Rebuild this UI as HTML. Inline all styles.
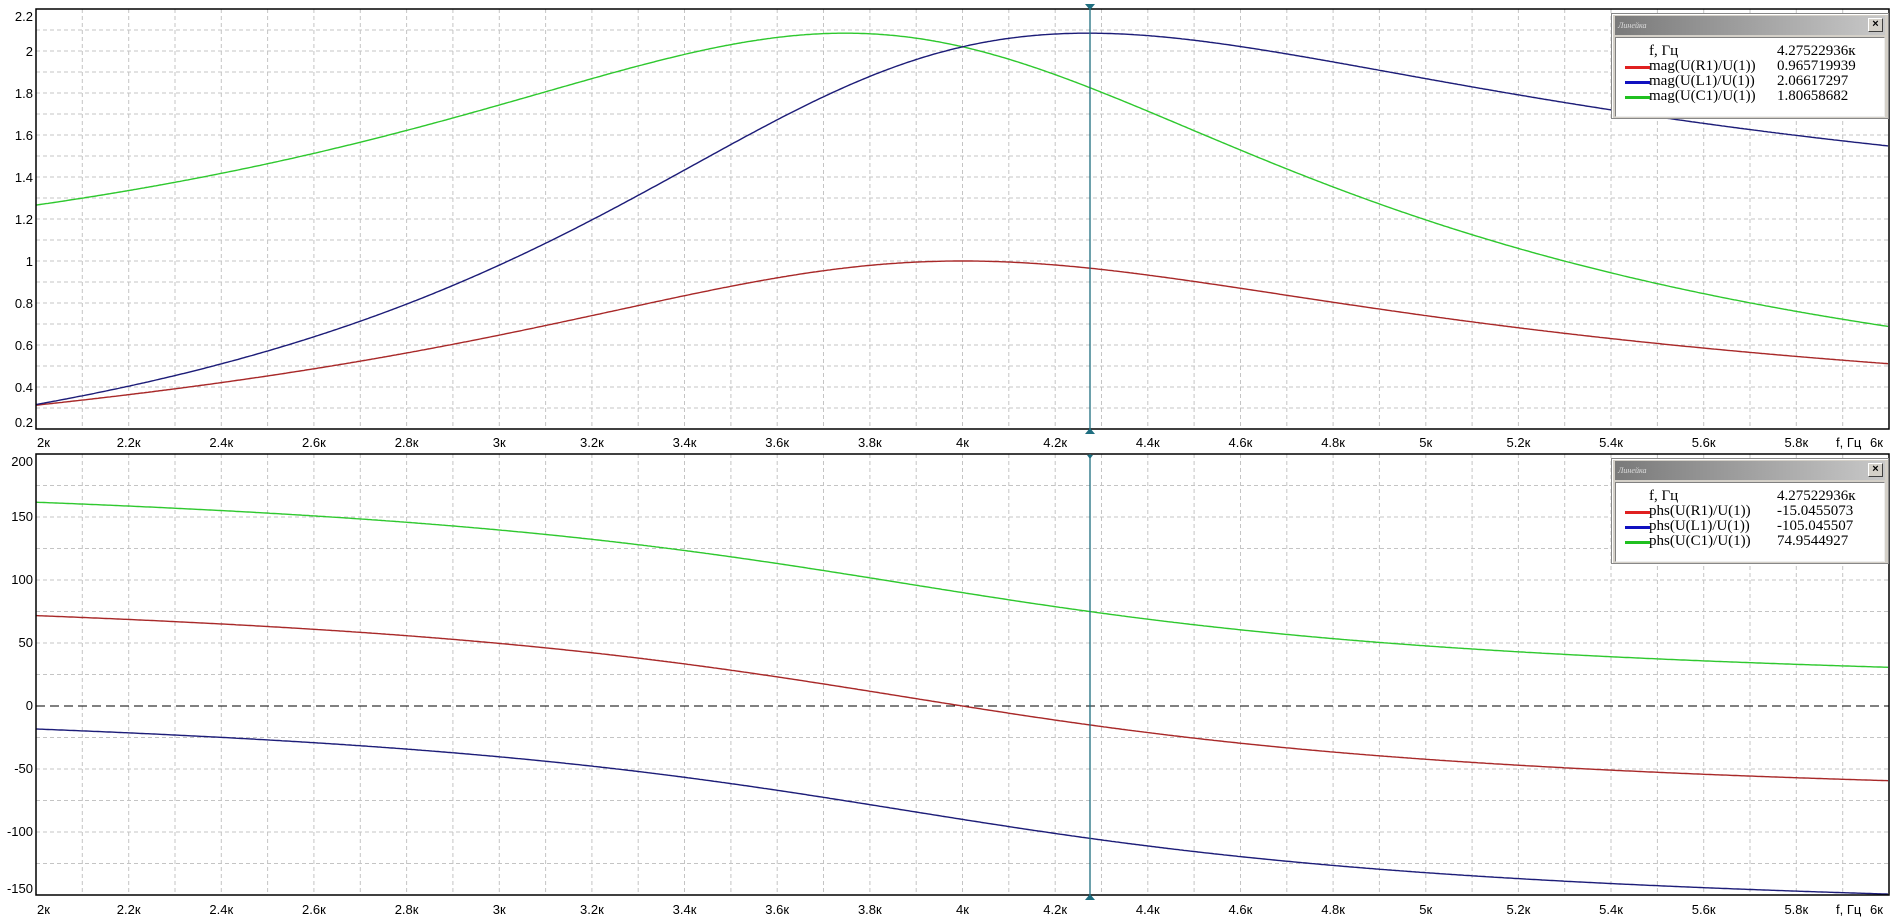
<!DOCTYPE html>
<html><head><meta charset="utf-8"><style>
body{margin:0;width:1892px;height:915px;background:#fff;overflow:hidden;position:relative;font-family:"Liberation Sans",sans-serif}
.yl{position:absolute;width:33px;text-align:right;font-size:13px;color:#000;line-height:14px}
.xl{position:absolute;font-size:13px;line-height:14px;color:#000;white-space:nowrap}
.leg{position:absolute;left:1611px;width:276px;background:#d4d0c8;border:1px solid #888;box-shadow:inset 1px 1px #fff}
.tb{height:19px;margin:2px 3px;background:linear-gradient(to right,#7a7a7a,#c8c8c8);position:relative;font:italic 8px "Liberation Serif",serif;color:#ddd;line-height:19px;padding-left:3px}
.x{position:absolute;right:2px;top:2px;width:13px;height:12px;background:#d4d0c8;border:1px solid #fff;border-right-color:#404040;border-bottom-color:#404040;font:bold 11px "Liberation Sans",sans-serif;color:#000;line-height:11px;text-align:center;font-style:normal}
.bd{margin:0 3px 3px;background:#fff;border:1px solid #808080;border-right-color:#eee;border-bottom-color:#eee;height:78px;position:relative;font:15px "Liberation Serif","Noto Serif CJK SC",serif;color:#000}
.r{position:absolute;left:0;width:100%;height:15px;line-height:15px}
.r .n{position:absolute;left:33px}.r .v{position:absolute;left:161px}
.r .s{position:absolute;left:9px;top:7px;width:25px;height:3px}
</style></head><body>
<svg id="g" width="1892" height="915" style="position:absolute;left:0;top:0"></svg>
<div class="yl" style="top:10px">2.2</div><div class="yl" style="top:45px">2</div><div class="yl" style="top:87px">1.8</div><div class="yl" style="top:129px">1.6</div><div class="yl" style="top:171px">1.4</div><div class="yl" style="top:213px">1.2</div><div class="yl" style="top:255px">1</div><div class="yl" style="top:297px">0.8</div><div class="yl" style="top:339px">0.6</div><div class="yl" style="top:381px">0.4</div><div class="yl" style="top:416px">0.2</div>
<div class="yl" style="top:455px">200</div><div class="yl" style="top:510px">150</div><div class="yl" style="top:573px">100</div><div class="yl" style="top:636px">50</div><div class="yl" style="top:699px">0</div><div class="yl" style="top:762px">-50</div><div class="yl" style="top:825px">-100</div><div class="yl" style="top:882px">-150</div>
<div id="xl"></div>
<div class="leg" style="top:13px;height:104px">
<div class="tb">Линейка<div class="x">×</div></div>
<div class="bd">
<div class="r" style="top:6px"><span class="n">f, Гц</span><span class="v">4.27522936к</span></div>
<div class="r" style="top:21px"><span class="s" style="background:#e02020"></span><span class="n">mag(U(R1)/U(1))</span><span class="v">0.965719939</span></div>
<div class="r" style="top:36px"><span class="s" style="background:#1010c0"></span><span class="n">mag(U(L1)/U(1))</span><span class="v">2.06617297</span></div>
<div class="r" style="top:51px"><span class="s" style="background:#20c020"></span><span class="n">mag(U(C1)/U(1))</span><span class="v">1.80658682</span></div>
</div></div>
<div class="leg" style="top:458px;height:104px">
<div class="tb">Линейка<div class="x">×</div></div>
<div class="bd">
<div class="r" style="top:6px"><span class="n">f, Гц</span><span class="v">4.27522936к</span></div>
<div class="r" style="top:21px"><span class="s" style="background:#e02020"></span><span class="n">phs(U(R1)/U(1))</span><span class="v">-15.0455073</span></div>
<div class="r" style="top:36px"><span class="s" style="background:#1010c0"></span><span class="n">phs(U(L1)/U(1))</span><span class="v">-105.045507</span></div>
<div class="r" style="top:51px"><span class="s" style="background:#20c020"></span><span class="n">phs(U(C1)/U(1))</span><span class="v">74.9544927</span></div>
</div></div>
<script>
var L=36,R=1889,W=R-L,T1=9,B1=429,T2=454,B2=895;
var s='';
function X(f){return L+(f-2)/4*W;}
// grids
for(var i=1;i<40;i++){var x=(L+i*W/40).toFixed(1);s+='<line x1="'+x+'" y1="'+T1+'" x2="'+x+'" y2="'+B1+'" stroke="#c4c4c4" stroke-dasharray="4,3"/>';s+='<line x1="'+x+'" y1="'+T2+'" x2="'+x+'" y2="'+B2+'" stroke="#c4c4c4" stroke-dasharray="4,3"/>';}
for(var i=1;i<20;i++){var y=(T1+i*21).toFixed(1);s+='<line x1="'+L+'" y1="'+y+'" x2="'+R+'" y2="'+y+'" stroke="#c4c4c4" stroke-dasharray="4,3"/>';}
for(var i=1;i<14;i++){if(i==8)continue;var y=(T2+i*31.5).toFixed(1);s+='<line x1="'+L+'" y1="'+y+'" x2="'+R+'" y2="'+y+'" stroke="#c4c4c4" stroke-dasharray="4,3"/>';}
s+='<line x1="'+L+'" y1="706" x2="'+R+'" y2="706" stroke="#000" stroke-dasharray="9,5"/>';
var Q=2.02,pr='',pl='',pc='',qr='',ql='',qc='';
function Y1(v){return B1-(v-0.2)*210;}function Y2(v){return T2+(200-v)*1.26;}
for(var px=0;px<=W;px+=2){var f=2+px/W*4,u=f/4,k=Q*(u-1/u),m=1/Math.sqrt(1+k*k),ph=-Math.atan(k)*180/Math.PI;
var x=(L+px).toFixed(1),c=px?'L':'M';
pr+=c+x+','+Y1(m).toFixed(1);pl+=c+x+','+Y1(Q*u*m).toFixed(1);pc+=c+x+','+Y1(Q/u*m).toFixed(1);
qr+=c+x+','+Y2(ph).toFixed(1);ql+=c+x+','+Y2(ph-90).toFixed(1);qc+=c+x+','+Y2(ph+90).toFixed(1);}
s+='<clipPath id="c1"><rect x="'+L+'" y="'+T1+'" width="'+W+'" height="'+(B1-T1)+'"/></clipPath>';
s+='<g clip-path="url(#c1)" fill="none" stroke-width="1.4"><path d="'+pr+'" stroke="#a82828"/><path d="'+pc+'" stroke="#2ec82e"/><path d="'+pl+'" stroke="#1c1c78"/></g>';
s+='<g fill="none" stroke-width="1.4"><path d="'+qr+'" stroke="#a82828"/><path d="'+qc+'" stroke="#2ec82e"/><path d="'+ql+'" stroke="#1c1c78"/></g>';
s+='<rect x="'+L+'" y="'+T1+'" width="'+W+'" height="'+(B1-T1)+'" fill="none" stroke="#000" stroke-width="1.5"/>';
s+='<rect x="'+L+'" y="'+T2+'" width="'+W+'" height="'+(B2-T2)+'" fill="none" stroke="#000" stroke-width="1.5"/>';
var cx=1090;
s+='<line x1="'+cx+'" y1="'+T1+'" x2="'+cx+'" y2="'+B1+'" stroke="#1e6e80" stroke-width="1.3"/><line x1="'+cx+'" y1="'+T2+'" x2="'+cx+'" y2="'+B2+'" stroke="#1e6e80" stroke-width="1.3"/>';
s+='<path d="M1085,4L1095,4L1090,10Z M1085,434L1095,434L1090,428Z M1087,455L1093,455L1090,459Z M1085,900L1095,900L1090,894Z" fill="#1e6e80"/>';
document.getElementById('g').innerHTML=s;
var h='';var labs=['2к','2.2к','2.4к','2.6к','2.8к','3к','3.2к','3.4к','3.6к','3.8к','4к','4.2к','4.4к','4.6к','4.8к','5к','5.2к','5.4к','5.6к','5.8к'];
[436,903].forEach(function(t){labs.forEach(function(l,i){var x=X(2+i*0.2);var st=i==0?'left:'+(L+1)+'px':'left:'+(x-40)+'px;width:80px;text-align:center';h+='<div class="xl" style="top:'+t+'px;'+st+'">'+l+'</div>';});
h+='<div class="xl" style="top:'+t+'px;left:1836px">f, Гц</div><div class="xl" style="top:'+t+'px;left:1870px">6к</div>';});
document.getElementById('xl').innerHTML=h;
</script>
</body></html>
